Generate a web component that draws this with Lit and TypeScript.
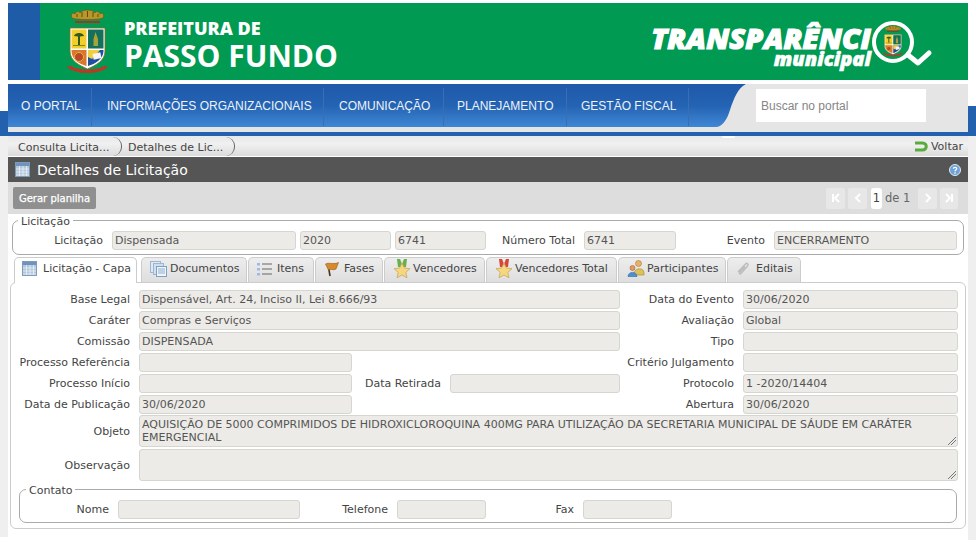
import { LitElement, html, css, svg } from "lit";
import { customElement } from "lit/decorators.js";

const crestBody = svg`
    <path d="M5 9 C3 5 6 3 8 5 C9 2 12 2 13 4 C15 0 26 0 28 4 C29 2 32 2 33 5 C35 3 38 5 36 9 C32 11 9 11 5 9 Z" fill="#b8962a" stroke="#6b5410" stroke-width=".6"/>
    <path d="M10 5v3M15 3v5M20.500 2v6M26 3v5M31 5v3" stroke="#5f4a10" stroke-width="1"/>
    <rect x="8" y="12" width="25" height="2" fill="#a8331f"/>
    <path d="M3 19 H38 V42 C38 52 29 56 20.500 60 C12 56 3 52 3 42 Z" fill="#fff" stroke="#8a6a18" stroke-width=".8"/>
    <rect x="4.500" y="20.500" width="15" height="19" fill="#f4cf2a"/>
    <rect x="21" y="20.500" width="15.500" height="19" fill="#14705a"/>
    <path d="M4.500 41 H19.500 V57 C12 55 4.500 50 4.500 42 Z" fill="#d9772c"/>
    <path d="M21 41 H36.500 V42 C36.500 50 28 55 21 57 Z" fill="#1f4f9f"/>
    <path d="M21 41 H33 L25 50 L21 48 Z" fill="#f1cf3c"/>
    <path d="M7 27 C8 23 16 23 17 27 L13 27.500 V36 H11 V27.500 Z" fill="#2f5a22"/>
    <path d="M6 36.500 H18" stroke="#7a8a20" stroke-width="1"/>
    <path d="M28.500 23 L31 30 V37 H26.500 V30 Z" fill="#a9a23a"/>
    <circle cx="12" cy="48" r="4.500" fill="#b8492a" stroke="#e7b23a"/>
    <rect x="26" y="44" width="8" height="6" fill="#f4f4f4" transform="rotate(-12 30 47)"/>
    <path d="M0 58 C9 66 32 66 41 58 L38 56.500 C30 62 11 62 3 56.500 Z" fill="#b83a26"/>`;
const crest = (w: number) => svg`<svg width="${w}" height="${(w * 67) / 41}" viewBox="0 0 41 67">${crestBody}</svg>`;

const i = {
  calc: svg`<svg width="15" height="15" viewBox="0 0 15 15"><rect x=".5" y=".5" width="14" height="14" fill="#b3c7dc" stroke="#7f9bbb"/><rect x="1" y="1" width="13" height="3" fill="#6f93bf"/><path d="M1 7h13M1 10h13M1 13h13M4.500 4v10M8 4v10M11.500 4v10" stroke="#e9f0f6" stroke-width=".8"/></svg>`,
  docs: svg`<svg width="17" height="16" viewBox="0 0 17 16"><rect x=".5" y=".5" width="10" height="11" fill="#dfe9f4" stroke="#9db6d2"/><rect x="3.500" y="2.500" width="10" height="11" fill="#cfdff0" stroke="#9db6d2"/><rect x="6.500" y="5.500" width="10" height="10" fill="#eef4fa" stroke="#7f9fc4"/><path d="M8 8h7M8 10h7M8 12h7" stroke="#8fadcf"/></svg>`,
  list: svg`<svg width="15" height="14" viewBox="0 0 15 14"><path d="M5 2h10M5 7h10M5 12h10" stroke="#666" stroke-width="1"/><rect x="0" y="1" width="3" height="2.500" fill="#9dbbe0"/><rect x="0" y="6" width="3" height="2.500" fill="#9dbbe0"/><rect x="0" y="11" width="3" height="2.500" fill="#9dbbe0"/></svg>`,
  flag: svg`<svg width="16" height="16" viewBox="0 0 16 16"><path d="M4 3 L6 15" stroke="#4a3420" stroke-width="1.600"/><path d="M1.500 3 C5 1 9 4 14.500 1.500 L12 8 C9 10 6 7 4.500 9 Z" fill="#d8892a" stroke="#8f5a18" stroke-width=".6"/></svg>`,
  star: (c: string) => svg`<svg width="18" height="19" viewBox="0 0 18 19"><path d="M4 0h3l2 5 2-5h3l-1 8H5Z" fill="${c}"/><path d="M9 4 L11.300 9 L17 9.700 L12.800 13.300 L14 18.800 L9 16 L4 18.800 L5.200 13.300 L1 9.700 L6.700 9 Z" fill="#f4d77e" stroke="#c9a860" stroke-width=".8"/></svg>`,
  people: svg`<svg width="18" height="17" viewBox="0 0 18 17"><circle cx="11.500" cy="3.500" r="3" fill="#e8b06a" stroke="#b07a30" stroke-width=".6"/><path d="M7 14 C7 8 16 7 17 12 V15 H8Z" fill="#dcc25a" stroke="#a8862a" stroke-width=".6"/><circle cx="5.500" cy="8" r="2.500" fill="#e39a6a" stroke="#a8602a" stroke-width=".6"/><path d="M1 16.500 C1 11 10 11 10 16.500Z" fill="#4f8fd0" stroke="#2f6aa8" stroke-width=".6"/></svg>`,
  clip: svg`<svg width="15" height="15" viewBox="0 0 15 15"><path d="M2 11 L9.500 3 C11 1.500 13 3.500 11.500 5 L5 12.500 C4 13.500 2.800 12.500 3.800 11.300 L9 5.500" fill="none" stroke="#bdbdbd" stroke-width="1.500"/></svg>`,
  back: svg`<svg width="14" height="13" viewBox="0 0 14 13"><path d="M1 3 H8.500 C13.500 3 13.500 10 8.500 10 H1" fill="none" stroke="#58ad3a" stroke-width="3"/></svg>`,
  help: svg`<svg width="12" height="12" viewBox="0 0 12 12"><circle cx="6" cy="6" r="5.500" fill="#6fa3d8" stroke="#dfeaf5"/><path d="M4.300 4.700 C4.500 2.900 7.800 3 7.700 4.800 C7.600 6 6 5.900 6 7.200" fill="none" stroke="#fff" stroke-width="1.200"/><circle cx="6" cy="9" r=".8" fill="#fff"/></svg>`,
};

const pagerIcon = (d: string) => svg`<svg width="10" height="10" viewBox="0 0 10 10"><path d="${d}" fill="none" stroke="#fff" stroke-width="2"/></svg>`;

@customElement("app-root")
export class AppRoot extends LitElement {
  static styles = css`
    :host {
      display: block; width: 976px; height: 543px; overflow: hidden; box-sizing: border-box; padding: 3px 8px 0;
      font: 11px "DejaVu Sans", Verdana, sans-serif; color: #333;
      background:
        linear-gradient(to bottom, #fff 0 111px, #2361ae 111px 136px, #efefef 136px 537px, #fff 537px) left top / 8px 100% no-repeat,
        linear-gradient(to bottom, #fff 0 106px, #2361ae 106px 136px, #efefef 136px 540px, #fff 540px) right top / 8px 100% no-repeat,
        #fff;
    }
    .banner { height: 77px; background: #009a52; display: flex; align-items: center; color: #fff; border-left: 32px solid #1f5ca8; }
    .crest { margin: 2px 0 0 27px; display: flex; }
    .pref { margin: 7px 0 0 16px; font-family: "Open Sans", sans-serif; font-weight: 700; line-height: 1; }
    .pref b { display: block; font-size: 18px; margin-bottom: 4px; }
    .pref strong { display: block; font-size: 30px; font-weight: 700; }
    .transp { margin: 16px 35px 0 auto; align-self: flex-start; display: flex; align-items: flex-start; }
    .tw { display: flex; flex-direction: column; align-items: flex-end; font-family: "Open Sans", sans-serif; font-style: italic; font-weight: 800; line-height: 1; padding-top: 4px; }
    .tw b { font-size: 29px; font-weight: 800; letter-spacing: .2px; -webkit-text-stroke: 1.2px #fff; }
    .tw i { font-size: 20px; font-weight: 800; margin-top: -3px; -webkit-text-stroke: .6px #fff; }
    .gap4 { height: 4px; background: #fff; }
    .nav { height: 48px; background: #e5e5e5; display: flex; align-items: flex-start; }
    .menu { height: 43px; display: flex; align-items: center; width: 708px; background: linear-gradient(#1f59aa, #2463b3 50%, #3f87d4); }
    .menu a { height: 38px; margin-top: 2px; padding-bottom: 2px; display: flex; align-items: center; font: 12px "Liberation Sans", sans-serif; color: #eef3f9; border-right: 1px solid #3a6eb4; box-sizing: border-box; white-space: nowrap; padding-left: 15px; }
    .search { margin: 5px 0 0 10px; width: 170px; height: 33px; background: #fff; display: flex; align-items: center; padding-left: 5px; box-sizing: border-box; font: 12px "Liberation Sans", sans-serif; color: #858585; }
    .bluebar { height: 4px; margin: 0 -8px; background: #2361ae; }
    .crumbs { height: 20px; background: linear-gradient(#e8e8e8, #f0f0f0 40%, #dcdcdc); display: flex; align-items: center; margin-bottom: 1px; position: relative; }
    .crumbs::before { content: ""; position: absolute; left: 714px; top: 0; width: 13px; height: 2px; background: #fff; border-radius: 0 0 4px 4px; }
    .crumb { width: 103px; padding: 2px 0 0 10px; height: 17px; display: flex; align-items: center; border-right: 1px solid #666; border-radius: 0 9px 9px 0; color: #444; }
    .crumb + .crumb { width: 106px; padding-left: 6px; }
    .back { margin: 1px 5px 0 auto; display: flex; align-items: center; gap: 3px; color: #444; }
    .title { height: 25px; background: #555; color: #fff; display: flex; align-items: center; padding: 0 7px; font-size: 14px; gap: 7px; }
    .title span { flex: 1; }
    .tools { height: 32px; background: #ddd; display: flex; align-items: center; padding: 0 10px 0 5px; }
    .gerar { width: 83px; height: 22px; background: #8f8f8f; color: #fff; border-radius: 2px; display: flex; align-items: center; justify-content: center; font-size: 10px; -webkit-text-stroke: .25px #fff; }
    .pager { margin-left: auto; display: flex; align-items: center; color: #666; font-size: 11.500px; }
    .pg { width: 19px; height: 21px; background: #e7e7e7; border-radius: 2px; display: flex; align-items: center; justify-content: center; margin-right: 3px; }
    .pg.last { width: 18px; margin-right: 0; }
    .pgi { width: 11px; height: 21px; background: #fff; border-radius: 3px; display: flex; align-items: center; justify-content: center; margin: 0 3px 0 1px; color: #444; }
    .of { width: 33px; }
    fieldset { margin: 0; padding: 0; border: 1px solid #aaa; border-radius: 7px; min-width: 0; box-sizing: border-box; display: block; }
    legend { padding: 0 3px; margin-left: 6px; color: #444; line-height: 12px; transform: translateY(2px); }
    .top { margin: 0 4px; height: 41px; padding-top: 5px; }
    .top legend { margin-left: 5px; }
    .toprow { height: 19px; display: flex; align-items: center; }
    .lab { color: #444; white-space: nowrap; text-align: right; box-sizing: border-box; padding-right: 9px; }
    .lab.up { margin-top: -2px; }
    .in { height: 19px; background: #ecebe7; border: 1px solid #d6d6d0; border-radius: 3px; box-sizing: border-box; padding: 0 2px; display: flex; align-items: center; color: #555; white-space: nowrap; overflow: hidden; }
    .tabs { display: flex; padding-left: 6px; height: 25px; margin-top: 2px; position: relative; z-index: 1; }
    .tab { height: 25px; box-sizing: border-box; border: 1px solid #ccc; border-bottom: 0; border-radius: 5px 5px 0 0; background: linear-gradient(#ededed, #dedede); display: flex; align-items: center; padding: 0 0 3px 8px; color: #444; margin-right: 1px; }
    .tab.on { background: #fff; border-color: #ccc; height: 26px; padding: 0 0 4px 7px; margin-right: 4px; gap: 6px; }
    .panel { margin: 0 2px; height: 247px; background: #fff; border: 1px solid #ccc; border-radius: 6px; box-sizing: border-box; padding-top: 7px; }
    .grid { display: grid; grid-template-columns: 128px 213px 98px 170px 123px 215px; grid-template-rows: repeat(6, 19px) 32px 32px; row-gap: 2px; align-items: center; }
    .s3 { grid-column: span 3; }
    .grid .ta { grid-column: 2 / 7; height: 32px; margin-top: -2px; align-items: flex-start; position: relative; white-space: normal; line-height: 13px; padding: 2px 22px 0 2px; }
    .ta::after { content: ""; position: absolute; right: 1px; bottom: 1px; width: 8px; height: 8px; background: linear-gradient(135deg, transparent 45%, #777 45% 52%, transparent 52% 68%, #777 68% 75%, transparent 75%); }
    .contato { margin: 1px 8px 0; height: 40px; padding-top: 5px; }
  `;

  render() {
    const f = (l: string, lw: number, v: string, w: number) =>
      html`<div class="lab" style="width:${lw}px">${l}</div><div class="in" style="width:${w}px">${v}</div>`;
    const tabs: [unknown, string, number, number][] = [
      [i.docs, "Documentos", 106, 3], [i.list, "Itens", 66, 5], [i.flag, "Fases", 68, 4],
      [i.star("#68b04a"), "Vencedores", 101, 2], [i.star("#d8443a"), "Vencedores Total", 131, 2],
      [i.people, "Participantes", 108, 2], [i.clip, "Editais", 74, 5],
    ];
    return html`
      <div class="banner">
        <div class="crest">${crest(41)}</div>
        <div class="pref"><b>PREFEITURA DE</b><strong>PASSO FUNDO</strong></div>
        <div class="transp">
          <div class="tw"><b>TRANSPARÊNCI</b><i>municipal</i></div>
          <svg width="62" height="50" viewBox="0 0 62 50">
            <circle cx="22" cy="23" r="19" fill="#009a52" stroke="#fff" stroke-width="4"/>
            <svg x="12" y="6" width="20" height="33" viewBox="0 0 41 67">${crestBody}</svg>
            <path d="M37 36 L47 44 L58 34" fill="none" stroke="#fff" stroke-width="5" stroke-linecap="round" stroke-linejoin="round"/>
          </svg>
        </div>
      </div>
      <div class="gap4"></div>
      <div class="nav">
        <div class="menu">
          <a style="width:84px;padding-left:13px">O PORTAL</a>
          <a style="width:232px">INFORMAÇÕES ORGANIZACIONAIS</a>
          <a style="width:120px">COMUNICAÇÃO</a>
          <a style="width:123px;padding-left:13px">PLANEJAMENTO</a>
          <a style="width:122px;padding-left:14px">GESTÃO FISCAL</a>
        </div>
        <svg width="30" height="43" viewBox="0 0 30 43"><defs><linearGradient id="g" x1="0" y1="0" x2="0" y2="1"><stop offset="0" stop-color="#1f59aa"/><stop offset=".5" stop-color="#2463b3"/><stop offset="1" stop-color="#3f87d4"/></linearGradient></defs><path d="M0 0 H30 C22 4 18 14 14 26 C11 36 6 43 0 43 Z" fill="url(#g)"/></svg>
        <div class="search">Buscar no portal</div>
      </div>
      <div class="bluebar"></div>
      <div class="crumbs">
        <div class="crumb">Consulta Licita...</div>
        <div class="crumb">Detalhes de Lic...</div>
        <div class="back">${i.back}Voltar</div>
      </div>
      <div class="title">${i.calc}<span>Detalhes de Licitação</span>${i.help}</div>
      <div class="tools">
        <div class="gerar">Gerar planilha</div>
        <div class="pager">
          <div class="pg">${pagerIcon("M2 1v8M8 1 4 5l4 4")}</div>
          <div class="pg">${pagerIcon("M7 1 3 5l4 4")}</div>
          <div class="pgi">1</div><div class="of">de 1</div>
          <div class="pg">${pagerIcon("M3 1l4 4-4 4")}</div>
          <div class="pg last">${pagerIcon("M2 1l4 4-4 4M8 1v8")}</div>
        </div>
      </div>
      <fieldset class="top">
        <legend>Licitação</legend>
        <div class="toprow">
          ${f("Licitação", 99, "Dispensada", 184)}
          <div class="in" style="width:91px;margin-left:4px">2020</div>
          <div class="in" style="width:91px;margin-left:4px">6741</div>
          ${f("Número Total", 98, "6741", 92)}
          ${f("Evento", 98, "ENCERRAMENTO", 183)}
        </div>
      </fieldset>
      <div class="tabs">
        <div class="tab on" style="width:123px">${i.calc}Licitação - Capa</div>
        ${tabs.map(([ic, t, w, g]) => html`<div class="tab" style="width:${w}px;gap:${g}px">${ic}${t}</div>`)}
      </div>
      <div class="panel">
        <div class="grid">
          <div class="lab">Base Legal</div><div class="in s3">Dispensável, Art. 24, Inciso II, Lei 8.666/93</div><div class="lab">Data do Evento</div><div class="in">30/06/2020</div>
          <div class="lab">Caráter</div><div class="in s3">Compras e Serviços</div><div class="lab">Avaliação</div><div class="in">Global</div>
          <div class="lab">Comissão</div><div class="in s3">DISPENSADA</div><div class="lab">Tipo</div><div class="in"></div>
          <div class="lab">Processo Referência</div><div class="in"></div><div></div><div></div><div class="lab">Critério Julgamento</div><div class="in"></div>
          <div class="lab">Processo Início</div><div class="in"></div><div class="lab">Data Retirada</div><div class="in"></div><div class="lab">Protocolo</div><div class="in">1 -2020/14404</div>
          <div class="lab">Data de Publicação</div><div class="in">30/06/2020</div><div></div><div></div><div class="lab">Abertura</div><div class="in">30/06/2020</div>
          <div class="lab up">Objeto</div><div class="in ta">AQUISIÇÃO DE 5000 COMPRIMIDOS DE HIDROXICLOROQUINA 400MG PARA UTILIZAÇÃO DA SECRETARIA MUNICIPAL DE SÁUDE EM CARÁTER EMERGENCIAL</div>
          <div class="lab up">Observação</div><div class="in ta"></div>
        </div>
        <fieldset class="contato">
          <legend>Contato</legend>
          <div class="toprow">
            ${f("Nome", 98, "", 182)}
            ${f("Telefone", 97, "", 89)}
            ${f("Fax", 97, "", 89)}
          </div>
        </fieldset>
      </div>
    `;
  }
}
